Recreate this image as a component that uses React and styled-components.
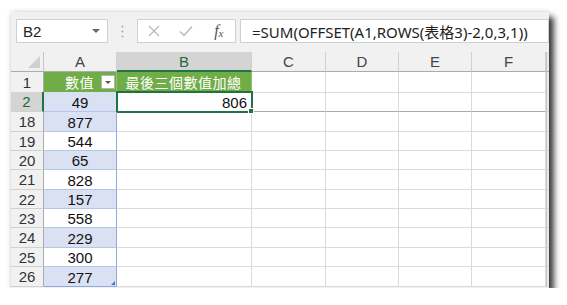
import styled, { createGlobalStyle } from "styled-components";

const GlobalStyle = createGlobalStyle`
  body {
    margin: 0;
    background: #fff;
    font-family: "Liberation Sans", "Noto Sans CJK TC", sans-serif;
  }
`;

const COLS = "33px 73px 135px 74px 73px 73px 74px 3px";
const GRID = "#dadada";

const rows = [
  { n: 2, v: 49, h: 20, band: true, active: true },
  { n: 18, v: 877, h: 20, band: true },
  { n: 19, v: 544, h: 19 },
  { n: 20, v: 65, h: 19, band: true },
  { n: 21, v: 828, h: 20 },
  { n: 22, v: 157, h: 19, band: true },
  { n: 23, v: 558, h: 19 },
  { n: 24, v: 229, h: 20, band: true },
  { n: 25, v: 300, h: 19 },
  { n: 26, v: 277, h: 20, band: true, last: true },
];

export default function App() {
  return (
    <>
      <GlobalStyle />
      <Window>
        <FormulaBar>
          <NameBox>
            <span>B2</span>
            <Caret />
          </NameBox>
          <Grip>
            <svg width="3" height="13" viewBox="0 0 3 13">
              <circle cx="1.5" cy="1.5" r="1" fill="#a8a8a8" />
              <circle cx="1.5" cy="6.5" r="1" fill="#a8a8a8" />
              <circle cx="1.5" cy="11.5" r="1" fill="#a8a8a8" />
            </svg>
          </Grip>
          <FuncBox>
            <IconSlot>
              <svg width="12" height="12" viewBox="0 0 12 12">
                <path d="M1 1L11 11M11 1L1 11" stroke="#b9b9b9" strokeWidth="1.2" fill="none" />
              </svg>
            </IconSlot>
            <IconSlot>
              <svg width="14" height="12" viewBox="0 0 14 12">
                <path d="M1 6.5L5 10.5L13 1.5" stroke="#b9b9b9" strokeWidth="1.4" fill="none" />
              </svg>
            </IconSlot>
            <IconSlot>
              <Fx>
                f<sub>x</sub>
              </Fx>
            </IconSlot>
          </FuncBox>
          <FormulaInput>=SUM(OFFSET(A1,ROWS(表格3)-2,0,3,1))</FormulaInput>
        </FormulaBar>

        <Sheet>
          <Row $h={20}>
            <Corner />
            {["A", "B", "C", "D", "E", "F"].map((c) => (
              <ColHead key={c} $active={c === "B"}>
                {c}
              </ColHead>
            ))}
            <Edge $head />
          </Row>

          <Row $h={20}>
            <RowHead>1</RowHead>
            <TableHead $align="flex-end">
              數值
              <FilterButton />
            </TableHead>
            <TableHead $align="center">最後三個數值加總</TableHead>
            <Cell />
            <Cell />
            <Cell />
            <Cell />
            <Edge />
          </Row>

          {rows.map((r) => (
            <Row key={r.n} $h={r.h} $break={r.n === 2}>
              <RowHead $active={r.active}>{r.n}</RowHead>
              <TableCell $band={r.band} $last={r.last}>
                {r.v}
              </TableCell>
              {r.active ? <SelectedCell>806</SelectedCell> : <Cell />}
              <Cell />
              <Cell />
              <Cell />
              <Cell />
              <Edge />
            </Row>
          ))}
        </Sheet>
      </Window>
    </>
  );
}

const Window = styled.div`
  margin: 12px 0 0 11px;
  width: 538px;
  height: 276px;
  background: #f1f1f1;
  box-shadow: 5px 5px 6px rgba(0, 0, 0, 0.75), 0 0 5px rgba(0, 0, 0, 0.18);
  display: flex;
  flex-direction: column;
  overflow: hidden;
`;

const FormulaBar = styled.div`
  display: flex;
  align-items: stretch;
  height: 24px;
  padding: 7px 0 0 5px;
  margin-bottom: 9px;
`;

const Box = styled.div`
  box-sizing: border-box;
  background: #fff;
  border: 1px solid #d0d0d0;
  display: flex;
  align-items: center;
`;

const NameBox = styled(Box)`
  width: 92px;
  padding: 0 6px 0 6px;
  justify-content: space-between;
  font-size: 15px;
  color: #222;
`;

const Caret = styled.span`
  width: 0;
  height: 0;
  border-left: 4px solid transparent;
  border-right: 4px solid transparent;
  border-top: 4px solid #666;
  margin-right: 1px;
`;

const Grip = styled.div`
  width: 29px;
  display: flex;
  align-items: center;
  justify-content: center;
`;

const FuncBox = styled(Box)`
  width: 99px;
  margin-right: 4px;
`;

const IconSlot = styled.div`
  width: 33px;
  display: flex;
  align-items: center;
  justify-content: center;
`;

const Fx = styled.span`
  font-family: "Liberation Serif", serif;
  font-style: italic;
  font-size: 16px;
  color: #555;
  sub {
    font-size: 11px;
    vertical-align: -1px;
  }
`;

const FormulaInput = styled(Box)`
  flex: 1;
  padding-left: 11px;
  font-family: "Noto Sans", "Noto Sans CJK TC", sans-serif;
  font-size: 15px;
  color: #222;
  white-space: nowrap;
`;

const Sheet = styled.div`
  display: flex;
  flex-direction: column;
  background: #fff;
`;

const Row = styled.div`
  display: grid;
  grid-template-columns: ${COLS};
  height: ${(p) => p.$h}px;
  & > * {
    box-sizing: border-box;
    border-bottom: 1px solid ${(p) => (p.$break ? "#a8a8a8" : GRID)};
  }
`;

const HeadBase = styled.div`
  display: flex;
  align-items: center;
  justify-content: center;
  font-size: 15px;
`;

const Corner = styled(HeadBase)`
  background: #f1f1f1;
  border-right: 1px solid #c6c6c6;
  && {
    border-bottom: 1px solid #ababab;
  }
  position: relative;
  &::after {
    content: "";
    position: absolute;
    right: 3px;
    bottom: 3px;
    border-left: 12px solid transparent;
    border-bottom: 12px solid #d0d0d0;
  }
`;

const ColHead = styled(HeadBase)`
  background: ${(p) => (p.$active ? "#d4d4d4" : "#f1f1f1")};
  color: ${(p) => (p.$active ? "#1e6b41" : "#444")};
  border-right: 1px solid #d0d0d0;
  && {
    border-bottom: ${(p) => (p.$active ? "2px solid #217346" : "1px solid #ababab")};
  }
`;

const RowHead = styled(HeadBase)`
  background: ${(p) => (p.$active ? "#d4d4d4" : "#f1f1f1")};
  color: ${(p) => (p.$active ? "#1e6b41" : "#333")};
  border-right: ${(p) => (p.$active ? "2px solid #217346" : "1px solid #ababab")};
  && {
    border-bottom-color: #d0d0d0;
  }
`;

const TableHead = styled.div`
  display: flex;
  align-items: center;
  justify-content: ${(p) => p.$align};
  gap: 7px;
  padding-right: 1px;
  background: #70ad47;
  color: #fff;
  font-family: "Noto Sans CJK TC", sans-serif;
  font-size: 14px;
  letter-spacing: 0.5px;
  border-right: 1px solid #8fc06a;
  && {
    border-bottom: 1px solid #70ad47;
  }
`;

const FilterButton = styled.span`
  box-sizing: border-box;
  width: 14px;
  height: 14px;
  background: #fff;
  border: 1px solid #b4b4b4;
  display: flex;
  align-items: center;
  justify-content: center;
  &::after {
    content: "";
    border-left: 3px solid transparent;
    border-right: 3px solid transparent;
    border-top: 3px solid #555;
    margin-top: 1px;
  }
`;

const TableCell = styled.div`
  display: flex;
  align-items: center;
  justify-content: center;
  font-size: 15px;
  color: #111;
  padding-top: 1px;
  background: ${(p) => (p.$band ? "#d9e1f2" : "#fff")};
  border-right: 1px solid #8ea9db;
  && {
    border-bottom-color: ${(p) => (p.$last ? "#8ea9db" : "#b4c6e7")};
  }
  position: relative;
  &::after {
    content: ${(p) => (p.$last ? '""' : "none")};
    position: absolute;
    right: 1px;
    bottom: 1px;
    border-left: 4px solid transparent;
    border-bottom: 4px solid #4472c4;
  }
`;

const Cell = styled.div`
  border-right: 1px solid ${GRID};
`;

const SelectedCell = styled.div`
  position: relative;
  display: flex;
  align-items: center;
  justify-content: flex-end;
  padding: 1px 4px 0 0;
  font-size: 15px;
  color: #111;
  border-right: 1px solid ${GRID};
  outline: 2px solid #217346;
  outline-offset: -1px;
  &::after {
    content: "";
    position: absolute;
    right: -3px;
    bottom: -3px;
    width: 4px;
    height: 4px;
    background: #217346;
    border: 1px solid #fff;
  }
`;

const Edge = styled.div`
  background: #e8e8e8;
  border-left: 1px solid #c6c6c6;
  && {
    border-bottom-color: ${(p) => (p.$head ? "#ababab" : "#d6d6d6")};
  }
`;
